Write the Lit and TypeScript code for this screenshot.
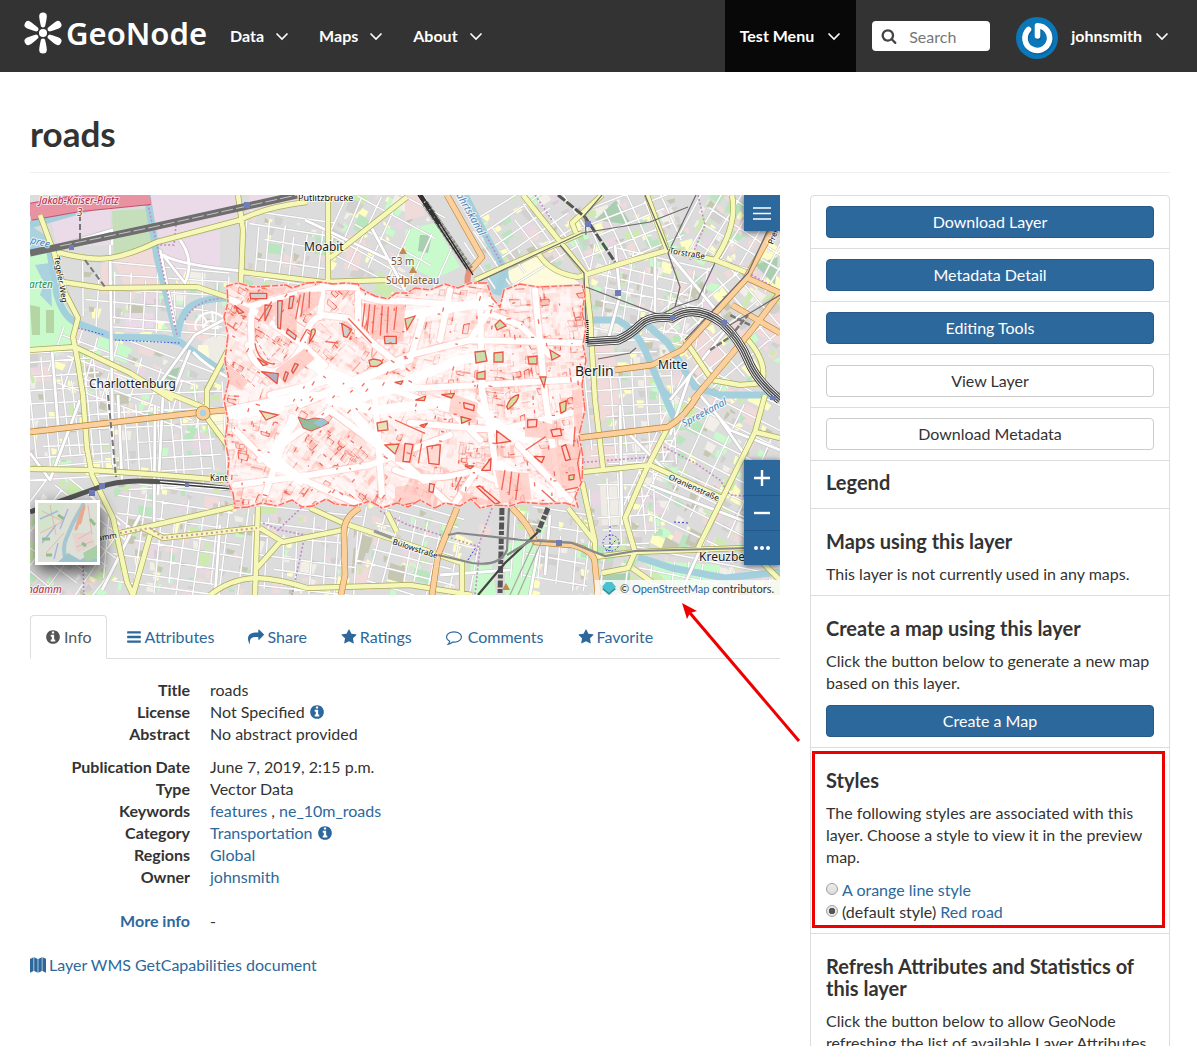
import { LitElement, html, svg, css } from "lit";
import { customElement, property, state } from "lit/decorators.js";

/* ---------- icons ---------- */

const ICONS: Record<string, string> = {
  info: "M1152 1376v-160q0-14-9-23t-23-9h-96v-512q0-14-9-23t-23-9h-320q-14 0-23 9t-9 23v160q0 14 9 23t23 9h96v320h-96q-14 0-23 9t-9 23v160q0 14 9 23t23 9h448q14 0 23-9t9-23zm-128-896v-160q0-14-9-23t-23-9h-192q-14 0-23 9t-9 23v160q0 14 9 23t23 9h192q14 0 23-9t9-23zm640 416q0 209-103 385.5t-279.5 279.5-385.5 103-385.5-103-279.5-279.5-103-385.5 103-385.5 279.5-279.5 385.5-103 385.5 103 279.5 279.5 103 385.5z",
  bars: "M1664 1344v128q0 26-19 45t-45 19h-1408q-26 0-45-19t-19-45v-128q0-26 19-45t45-19h1408q26 0 45 19t19 45zm0-512v128q0 26-19 45t-45 19h-1408q-26 0-45-19t-19-45v-128q0-26 19-45t45-19h1408q26 0 45 19t19 45zm0-512v128q0 26-19 45t-45 19h-1408q-26 0-45-19t-19-45v-128q0-26 19-45t45-19h1408q26 0 45 19t19 45z",
  share: "M1792 640q0 26-19 45l-512 512q-19 19-45 19t-45-19-19-45v-256h-224q-98 0-175.5 6t-154 21.5-133 42.5-105.5 69.5-80 101-48.5 138.5-17.5 181q0 55 5 123 0 6 2.5 23.5t2.5 26.5q0 15-8.5 25t-23.5 10q-16 0-28-17-7-9-13-22t-13.5-30-10.5-24q-127-285-127-451 0-199 53-333 162-403 875-403h224v-256q0-26 19-45t45-19 45 19l512 512q19 19 19 45z",
  star: "M1728 647q0 22-26 48l-363 354 86 500q1 7 1 20 0 21-10.5 35.5t-30.5 14.5q-19 0-40-12l-449-236-449 236q-22 12-40 12-21 0-31.5-14.5t-10.5-35.5q0-6 2-20l86-500-364-354q-25-27-25-48 0-37 56-46l502-73 225-455q19-41 49-41t49 41l225 455 502 73q56 9 56 46z",
  comment: "M896 384q-204 0-381.5 69.5t-282 187.5-104.5 255q0 112 71.5 213.5t201.5 175.5l87 50-27 96q-24 91-70 172 152-63 275-171l43-38 57 6q69 8 130 8 204 0 381.5-69.5t282-187.5 104.5-255-104.5-255-282-187.5-381.5-69.5zm896 512q0 174-120 321.5t-326 233-450 85.5q-70 0-145-8-198 175-460 242-49 14-114 22h-5q-15 0-27-10.5t-16-27.5v-1q-3-4-.5-12t2-10 4.5-9.5l6-9 7-8.5 8-9q7-8 31-34.5t34.5-38 31-39.5 32.5-51 27-59 26-76q-157-89-247.5-220t-90.5-281q0-130 71-248.5t191-204.5 286-136.5 348-50.5 348 50.5 286 136.5 191 204.5 71 248.5z",
  search: "M1216 832q0-185-131.5-316.5t-316.5-131.5-316.5 131.5-131.5 316.5 131.5 316.5 316.5 131.5 316.5-131.5 131.5-316.5zm512 832q0 52-38 90t-90 38q-54 0-90-38l-343-342q-179 124-399 124-143 0-273.5-55.5t-225-150-150-225-55.5-273.5 55.5-273.5 150-225 225-150 273.5-55.5 273.5 55.5 225 150 150 225 55.5 273.5q0 220-124 399l343 343q37 37 37 90z",
  map: "M0 220L400 40V1560L0 1752zM470 40L860 230V1750L470 1560zM930 230L1320 40V1560L930 1750zM1390 40L1792 200V1752L1390 1560z",
};

@customElement("fa-icon")
export class FaIcon extends LitElement {
  @property() name = "info";
  static styles = css`
    :host { display: inline-flex; width: 16px; height: 16px; vertical-align: -2px; }
    svg { width: 100%; height: 100%; fill: currentColor; }
  `;
  render() {
    return html`<svg viewBox="0 0 1792 1792" aria-hidden="true"><path d=${ICONS[this.name]}></path></svg>`;
  }
}

@customElement("chevron-down")
export class ChevronDown extends LitElement {
  static styles = css`
    :host { display: inline-flex; width: 14px; height: 10px; }
    svg { width: 14px; height: 10px; fill: none; stroke: currentColor; stroke-width: 1.6; }
  `;
  render() {
    return html`<svg viewBox="0 0 14 10" aria-hidden="true"><path d="M1.5 2.5L7 8L12.5 2.5"></path></svg>`;
  }
}

/* ---------- map drawing ---------- */

function seeded(seed: number) {
  return () => {
    seed = (seed * 1664525 + 1013904223) >>> 0;
    return seed / 4294967296;
  };
}

interface Zone { x: number; y: number; w: number; h: number; a: number; gx: number; gy: number; }

const ZONES: Zone[] = [
  { x: 50, y: 70, w: 150, h: 70, a: 4, gx: 15, gy: 13 },
  { x: 212, y: 22, w: 90, h: 70, a: 9, gx: 13, gy: 16 },
  { x: 300, y: 0, w: 120, h: 90, a: 28, gx: 19, gy: 21 },
  { x: -10, y: 155, w: 100, h: 130, a: -4, gx: 12, gy: 13 },
  { x: 80, y: 185, w: 120, h: 110, a: -3, gx: 15, gy: 15 },
  { x: 20, y: 150, w: 170, h: 70, a: 20, gx: 22, gy: 18 },
  { x: -20, y: 295, w: 110, h: 110, a: 38, gx: 24, gy: 17 },
  { x: 75, y: 295, w: 150, h: 110, a: 8, gx: 15, gy: 14 },
  { x: 220, y: 315, w: 110, h: 90, a: 6, gx: 16, gy: 15 },
  { x: 315, y: 310, w: 130, h: 90, a: 15, gx: 16, gy: 15 },
  { x: 480, y: 315, w: 90, h: 90, a: 8, gx: 16, gy: 17 },
  { x: 440, y: 0, w: 110, h: 80, a: -33, gx: 19, gy: 17 },
  { x: 545, y: 0, w: 110, h: 72, a: -22, gx: 16, gy: 14 },
  { x: 555, y: 60, w: 120, h: 85, a: 12, gx: 17, gy: 14 },
  { x: 655, y: -5, w: 110, h: 90, a: 32, gx: 16, gy: 17 },
  { x: 555, y: 145, w: 90, h: 130, a: -3, gx: 12, gy: 12 },
  { x: 640, y: 80, w: 110, h: 110, a: -40, gx: 18, gy: 17 },
  { x: 560, y: 275, w: 70, h: 80, a: -2, gx: 14, gy: 15 },
  { x: 615, y: 190, w: 150, h: 170, a: 26, gx: 22, gy: 18 },
  { x: 570, y: 365, w: 190, h: 50, a: 12, gx: 20, gy: 16 },
];

const PATCH_COLORS = ["#f1dada", "#f1dada", "#ffffc4", "#ffffc4", "#c8facc", "#b9e6bf", "#f2efe9", "#cdebb0", "#e9d8e4", "#c6c7b2", "#d3d0d0"];

function buildCity() {
  const rnd = seeded(41);
  const streets: string[] = [];
  const patches: string[][] = PATCH_COLORS.map(() => []);
  for (const z of ZONES) {
    const t = (z.a * Math.PI) / 180;
    const cx = z.x + z.w / 2;
    const cy = z.y + z.h / 2;
    const p = (u: number, v: number) =>
      `${(cx + u * Math.cos(t) - v * Math.sin(t)).toFixed(1)} ${(cy + u * Math.sin(t) + v * Math.cos(t)).toFixed(1)}`;
    const n = Math.round((z.w * z.h) / (z.x > 430 ? 120 : 180));
    for (let i = 0; i < n; i++) {
      const u = (rnd() - 0.5) * z.w;
      const v = (rnd() - 0.5) * z.h;
      const big = rnd() > 0.82 ? 2 : 1;
      const w = (3 + rnd() * 7) * big;
      const h = (3 + rnd() * 6) * big;
      const k = Math.floor(rnd() * PATCH_COLORS.length);
      patches[k].push(`M${p(u, v)}L${p(u + w, v + rnd() * 2)}L${p(u + w - rnd() * 3, v + h)}L${p(u + rnd() * 2, v + h)}Z`);
    }
    for (let u = -z.w / 2; u < z.w / 2; u += z.gx * (0.7 + rnd() * 0.6)) {
      const cut = rnd() * 0.3;
      streets.push(`M${p(u, -z.h / 2 + z.h * cut)}L${p(u + rnd() * 5, z.h / 2 - (rnd() * z.h) / 5)}`);
    }
    for (let v = -z.h / 2; v < z.h / 2; v += z.gy * (0.7 + rnd() * 0.6)) {
      streets.push(`M${p(-z.w / 2 + (rnd() * z.w) / 4, v)}L${p(z.w / 2 - (rnd() * z.w) / 5, v + rnd() * 5 - 2)}`);
    }
  }
  return { streets: streets.join(""), patches: patches.map((a) => a.join("")) };
}

const LAYER_EDGE =
  "M197 91L208 88L222 92L240 91L256 90L262 93L277 88L290 87L303 89L315 88L328 89L331 94L345 101L358 104L366 98L377 98L385 93L400 95L415 89L428 93L440 88L457 88L462 103L470 112L474 95L490 89L508 92L530 91L552 90L555 100L552 118L556 132L553 150L556 165L552 190L555 215L549 240L553 262L552 286L545 302L548 312L535 308L512 309L492 307L480 311L463 310L450 313L441 304L430 311L415 308L405 313L390 305L378 312L367 308L352 313L340 306L325 311L305 309L296 304L283 311L272 312L262 305L247 311L232 308L218 312L205 313L203 298L197 286L199 265L195 245L198 225L194 205L199 185L195 165L198 140L194 122L198 108Z";

function buildLayer() {
  const rnd = seeded(977);
  const inX = () => 192 + rnd() * 366;
  const inY = () => 86 + rnd() * 228;
  const angle = (x: number, y: number) => {
    const base = x < 290 && y < 190 ? 32 : x > 470 ? -6 : x > 330 && y < 150 ? 10 : 24 + 18 * Math.sin(x / 40);
    return ((base + (rnd() > 0.5 ? 90 : 0) + (rnd() - 0.5) * 12) * Math.PI) / 180;
  };
  const seg = (min: number, max: number) => {
    const x = inX();
    const y = inY();
    const a = angle(x, y);
    const l = min + rnd() * (max - min);
    return `M${x.toFixed(1)} ${y.toFixed(1)}l${(l * Math.cos(a)).toFixed(1)} ${(l * Math.sin(a)).toFixed(1)}`;
  };
  const many = (n: number, f: () => string) => Array.from({ length: n }, f).join("");
  const block = () => {
    const x = inX();
    const y = inY();
    const a = angle(x, y);
    const w = 4 + rnd() * 8;
    const h = 3 + rnd() * 4;
    const c = Math.cos(a);
    const s = Math.sin(a);
    return `M${x.toFixed(1)} ${y.toFixed(1)}l${(w * c).toFixed(1)} ${(w * s).toFixed(1)}l${(-h * s).toFixed(1)} ${(h * c).toFixed(1)}l${(-w * c * 0.8).toFixed(1)} ${(-w * s * 0.8).toFixed(1)}z`;
  };
  return {
    pink: many(360, () => seg(10, 30)),
    red: many(380, () => seg(4, 16)),
    blocks: many(240, block),
    haze: many(1000, () => seg(8, 28)),
    late: many(30, block),
    veil: many(620, () => seg(10, 34)),
    ticks: many(210, () => seg(1, 5)),
  };
}

const CITY = buildCity();
const LAYER = buildLayer();

const YELLOW =
  "M10 20L24 58L35 98L48 123L43 142L48 168L53 200L57 253L62 280L83 323L97 387L103 400M27 57Q60 66 80 63T127 47L210 25Q235 12 277 7M33 87L73 93L167 92L197 102M208 0L213 35L211 88M212 77L293 87L357 85M298 0L298 87M377 2L300 63M0 155L45 152L100 178L143 205M130 195L175 213M198 155L177 195L177 213M177 223L197 250M0 274L60 275L133 280L193 285M90 338L203 312M113 333L133 343L227 333M120 340L103 400M228 312L225 400M230 333L253 347L313 335M250 347L227 373M180 400Q200 384 227 383Q250 384 277 393L380 390L442 400M280 313L313 328L380 350L432 368L432 400M357 317L367 337M493 0L555 78L560 122L565 205L573 273M445 85L552 38M572 0L542 28L546 38M508 58Q520 78 548 82L600 66L638 55L685 65L718 78M617 0L638 58M702 0Q708 30 685 65M655 145L682 185L710 190L732 188Q738 168 718 145M735 200L725 237L668 353M725 237L750 243M638 232L615 277L595 323L605 357L598 373L572 378M553 277L620 270L692 303M552 287L565 347L565 362M538 313L565 347M565 362L605 357L713 353L750 352M602 373L622 387M730 365L750 385";
const ORANGE =
  "M0 237L173 217L197 215M330 313Q313 322 314 340L315 380L311 400M427 313L408 360L402 400M482 313Q500 330 505 347L542 350Q566 356 565 370L568 400M547 243L638 232Q655 222 668 200M585 175L622 170L652 155L715 85L750 22M663 205L722 135L750 98M715 82L750 98M702 110L750 138M417 0L452 62L438 78";
const WATER =
  "M20 57L27 100Q34 123 47 128L83 142L133 143L150 147L193 177M147 142Q150 120 160 112T197 103M117 0L127 62L147 142M0 30L77 8L120 0M435 0L458 45L475 75L467 100M557 125L588 125Q606 135 615 155L632 195L642 205M615 128L638 148L665 192L690 200L750 200M608 362L642 373L695 383L750 377M632 195L645 225";
const WHITE_MAIN =
  "M25 52L82 35L82 50M80 50L83 270M150 45Q165 65 155 88L133 60Q150 70 212 76M130 55L145 130M0 258L20 285L50 205M22 155L28 230M160 155L140 205M193 125L165 140L125 195M163 157Q175 170 197 182M275 25L370 70M340 30L375 95M88 200L92 285M125 210L124 340M133 200L128 300M60 300L90 330M190 330L185 400M72 395L110 320M410 380L480 375M510 345L500 400M520 320L515 380M585 50L590 100L578 145M640 60L690 120M660 60L720 75M625 60L625 120M590 210L592 330M700 130L640 205M680 210L715 260M670 200L700 235L750 255M600 240L650 290M620 290L750 340M690 310L650 400M660 180L640 240";

const LAYER_ROADS =
  "M218 112L293 92L330 92M199 104L218 112L272 149L295 170M222 112Q220 135 222 152M218 150Q222 172 242 177Q262 172 274 147Q278 125 292 120L318 123L345 150L372 172M293 88L290 122M328 98L328 140M330 100Q350 108 372 106L460 112M198 215L260 202L330 196L450 190L552 184M195 222L290 200L380 160L440 145L552 148M320 185L345 200L352 300M262 222L235 300M205 290L280 280L340 270L420 240M440 145L458 118L490 130L520 160M452 195L462 245L468 290M380 228L470 235L552 215M488 250L540 305M395 115L380 165L270 210M365 275Q400 290 445 275L480 292M445 278L425 308M355 250L420 310M420 95L410 145M450 100L452 200M230 265L300 215L340 245L400 290M505 95L515 200L530 300M205 235L240 270L330 310M240 200L300 185L350 190L420 215L450 245";

const CORE_ROADS = "M258 205L300 178L330 190L372 188L430 165L470 160M285 170L320 205L380 190M300 205L345 215L440 205L470 232L500 245M205 220L250 212M265 225L240 260L270 285M320 215L350 250M380 120L470 105M470 270L520 300";

const label = (x: number, y: number, text: string, cls = "place", rot = 0) =>
  svg`<text class=${cls} transform="translate(${x} ${y}) rotate(${rot})">${text}</text>`;

@customElement("layer-map")
export class LayerMap extends LitElement {
  static styles = css`
    :host { display: block; position: relative; height: 400px; overflow: hidden; font-family: Lato, "Noto Sans", sans-serif; }
    .canvas { display: block; width: 100%; height: 100%; }
    text { font-family: "Noto Sans", sans-serif; paint-order: stroke; stroke: rgba(255, 255, 255, 0.7); stroke-width: 2px; }
    .place { font-size: 12px; fill: #222; }
    .city { font-size: 14px; fill: #222; }
    .street { font-size: 8px; fill: #111; }
    .road { font-size: 9px; fill: #111; }
    .peak { font-size: 10px; fill: #7a5535; }
    .river { font-size: 10px; fill: #4a86bb; font-style: italic; }
    .park { font-size: 10px; fill: #2f8a4c; font-style: italic; }
    .exit { font-size: 10px; fill: #b02a45; font-style: italic; }
    .btn { display: flex; align-items: center; justify-content: center; width: 36px; height: 35px; padding: 0; border: 0; background: #2c689c; color: #fff; }
    .btn svg { width: 18px; height: 18px; stroke: #fff; stroke-width: 2; fill: none; }
    .menu { position: absolute; top: 0; right: 0; height: 36px; box-shadow: 0 1px 6px rgba(0, 0, 0, 0.6); }
    .menu svg { stroke-width: 1.6; }
    .zoom { position: absolute; right: 0; bottom: 30px; display: flex; flex-direction: column; box-shadow: 0 1px 6px rgba(0, 0, 0, 0.6); }
    .zoom .btn + .btn { border-top: 1px solid #23588a; }
    .thumb { position: absolute; left: 5px; bottom: 30px; width: 65px; height: 65px; padding: 0; border: 3px solid #fff; background: #d5dcd4; box-shadow: 2px 6px 16px rgba(0, 0, 0, 0.7); }
    .thumb svg { display: block; width: 59px; height: 59px; }
    .credit { position: absolute; right: 0; bottom: 0; display: flex; align-items: flex-end; gap: 4px; height: 15px; padding: 0 6px 0 7px; background: rgba(255, 255, 255, 0.75); color: #333; font-size: 11px; line-height: 12px; white-space: pre; }
    .credit svg { width: 14px; height: 14px; }
    .credit a { color: #2c689c; text-decoration: none; }
  `;

  private base() {
    return svg`
      <rect width="750" height="400" fill="#dddcdc"></rect>
      ${CITY.patches.map((d, i) => svg`<path d=${d} fill=${PATCH_COLORS[i]}></path>`)}
      <path fill="#ebdbe8" d="M20 20L80 12L82 50L27 52zM120 0L208 0L212 28L130 48zM130 50L190 35L190 73L158 68L150 92L135 60zM95 118L123 118L123 137L95 137zM220 0L290 0L265 8L215 22z"></path>
      <path fill="#c6dfbb" d="M82 16L116 14L126 54L112 58L84 64z"></path>
      <path fill="#f1dada" d="M84 65L128 52L132 90L95 92zM72 68L80 68L80 92L70 90zM318 40L335 45L328 76L314 74zM155 125L180 128L178 150L160 140zM375 0L392 0L395 20L375 26zM560 148L584 148L590 215L566 230zM555 250L590 250L592 270L556 274zM650 145L680 135L700 160L672 182zM735 120L750 118L750 150L728 140z"></path>
      <path fill="#c8facc" d="M0 60L20 58L28 100L48 128L43 150L0 154zM375 35L405 28L430 72L405 84L375 70zM475 350L500 340L512 345L498 400L475 400zM440 372L462 370L466 400L445 400zM625 200L650 210L660 230L640 225zM610 365L690 370L690 398L640 388z"></path>
      <path fill="#a9cfb0" d="M586 5L602 30L565 25zM570 380L600 378L600 396L570 396zM725 70L748 62L745 90zM390 40L402 40L398 58L388 56zM140 175L150 172L145 187L135 183z"></path>
      <path fill="#b5d6a4" d="M0 110L10 112L10 140L2 140zM16 115L24 115L24 138L16 138z"></path>
      <path fill="#efece5" d="M175 145L197 135L197 165L182 175L165 160zM570 290L590 285L592 330L572 330z"></path>
      <path fill="#fdfbdc" d="M475 78L505 62L545 84L555 94L485 92zM183 215L198 212L197 246L180 226zM168 150L178 150L180 170L168 165z"></path>
      <path fill="#aad3df" d="M5 70L20 68L22 112L10 100L14 88zM0 30L22 45L24 58L0 58zM457 82L478 75L480 90L470 100L460 98z"></path>
      <path d=${CITY.streets} fill="none" stroke="#c9c7c7" stroke-width="2.4"></path>
      <path d=${CITY.streets} fill="none" stroke="#fff" stroke-width="1.5"></path>
      <path d="M166 135a15 13 0 0 1 30-8M174 133a7 7 0 0 1 14 0zM172 120L177 127M182 116L183 126" fill="none" stroke="#fff" stroke-width="2"></path>
      <path d=${WATER} fill="none" stroke="#a4cfdc" stroke-width="7" stroke-linejoin="round"></path>
      <path d=${WHITE_MAIN} fill="none" stroke="#c4c2c2" stroke-width="4" stroke-linejoin="round"></path>
      <path d=${WHITE_MAIN} fill="none" stroke="#fff" stroke-width="2.8" stroke-linejoin="round"></path>
      <path d="M48 133L75 140M85 145L150 148" fill="none" stroke="#4646e0" stroke-dasharray="1.5 2"></path>
      <path d="M117 5L147 140M155 125Q165 104 195 103M445 20L475 75M146 30L144 50L120 50M233 328L250 335L275 340L262 400M247 336L272 312M53 371L54 400M350 316L378 330L450 352L445 400M462 313L445 360M545 268L622 262L630 250L665 268L690 285L700 300L730 302M668 0L675 30L660 65M700 68L740 90M505 0L522 25" fill="none" stroke="#c08cc4" stroke-width="1.6" stroke-dasharray="2 2"></path>
      <path d="M0 17L50 8L120 1" fill="none" stroke="#c9506a" stroke-width="18"></path>
      <path d="M0 17L50 8L120 1" fill="none" stroke="#e892a2" stroke-width="16"></path>
      <path d=${YELLOW} fill="none" stroke="#aaa957" stroke-width="6" stroke-linejoin="round"></path>
      <path d=${YELLOW} fill="none" stroke="#f5f8b8" stroke-width="4.6" stroke-linejoin="round"></path>
      <path d=${ORANGE} fill="none" stroke="#b98335" stroke-width="6.4" stroke-linejoin="round"></path>
      <path d=${ORANGE} fill="none" stroke="#fbd09c" stroke-width="5.2" stroke-linejoin="round"></path>
      <path d="M441 74Q436 80 438 92" fill="none" stroke="#e8907c" stroke-width="6"></path>
      <circle cx="173" cy="218" r="5" fill="#aad3df" stroke="#b98335" stroke-width="5"></circle>
      <circle cx="173" cy="218" r="5" fill="#aad3df" stroke="#fbd09c" stroke-width="3.6"></circle>
      <path d="M90 338L120 333L133 343L227 333" fill="none" stroke="#cf94ae" stroke-width="2" stroke-dasharray="2 3"></path>

      <path d="M0 58L123 32L267 0" fill="none" stroke="#6e6e6e" stroke-width="7"></path>
      <path d="M30 51L123 32L267 0" fill="none" stroke="#c9c3c6" stroke-width="1" stroke-dasharray="12 3"></path>
      <path d="M0 317L67 293Q85 286 110 286T203 294" fill="none" stroke="#555" stroke-width="5"></path>
      <path d="M130 288L203 294" fill="none" stroke="#fff" stroke-width="4"></path>
      <path d="M130 288L203 294" fill="none" stroke="#333" stroke-width="1.6"></path>
      <path d="M78 200Q83 250 86 282M50 20L50 45M55 65L75 92" fill="none" stroke="#777" stroke-width="2" stroke-dasharray="6 3"></path>
      <path d="M395 8L440 74" fill="none" stroke="#8d8d86" stroke-width="7" stroke-dasharray="3 .7 1 .5"></path>
      <path d="M388 0L437 74M392 0L443 80" fill="none" stroke="#222" stroke-width="1.2"></path>
      <path d="M390 0L410 30" fill="none" stroke="#333" stroke-width="4" stroke-dasharray="8 1"></path>
      <path d="M528 0L555 22L585 67" fill="none" stroke="#555" stroke-width="3" stroke-dasharray="9 2"></path>
      <path d="M472 313L470 400M518 313L508 337" fill="none" stroke="#555" stroke-width="5" stroke-dasharray="7 1.5 4 2"></path>
      <path d="M508 337L475 368L448 400" fill="none" stroke="#444" stroke-width="2.2"></path>
      <path d="M505 345L480 400M512 345L488 400" fill="none" stroke="#a9a9a4" stroke-width="1.2"></path>
      <path d="M418 340L428 338L492 345L542 348L575 361L605 356L720 353M408 360L442 368Q470 372 477 355L479 313M477 360L502 345" fill="none" stroke="#888" stroke-width="2.2"></path>
      <path d="M445 88L552 38L620 27L658 12M572 0L555 20L556 40M530 50L554 78L556 130M556 92L630 120L645 112L650 92L638 58L666 0M645 112L668 104L685 68M568 164L600 158L606 153M655 145L718 78L740 30M700 130L750 100M615 0L638 55" fill="none" stroke="#6c6969" stroke-width="1.2"></path>
      ${[["#333", 9], ["#fff", 7.4], ["#555", 5.6], ["#fff", 2.6], ["#444", 1.4]].map(
        ([c, w]) => svg`<path d="M557 147L588 145Q600 140 610 130T642 123Q665 108 692 128Q710 145 718 165T750 205" fill="none" stroke=${c} stroke-width=${w}></path>`
      )}
      <path d="M557 125L557 148" stroke="#222" stroke-width="3" stroke-dasharray="1 1"></path>
      <path d="M680 155L700 142L718 120M720 130L700 120" fill="none" stroke="#777" stroke-width="2.4" stroke-dasharray="6 2"></path>
      <path d="M344 336L362 343" stroke="#999" stroke-width="3"></path>
      <circle cx="581" cy="348" r="8" fill="none" stroke="#3333dd" stroke-dasharray="1.5 2"></circle>
      <path d="M580 331L580 356M576 356L586 345M644 327L658 328M438 365L446 352" stroke="#3333dd" stroke-dasharray="2 2"></path>
      <g fill="#6f7cb8"><path d="M214 7h6v6h-6zM39 50h5v5h-5zM555 26h6v6h-6zM585 95h6v6h-6zM640 120h5v5h-5zM691 125h6v6h-6zM526 345h6v6h-6zM69 288h6v6h-6zM59 295h6v6h-6zM155 288h4v4h-4zM740 201h6v4h-6z"></path></g>
    `;
  }

  private overlay() {
    return svg`
      <g clip-path="url(#edge)">
        <path d=${LAYER_EDGE} fill="#ffe2de" fill-opacity=".96"></path>
        <path d=${LAYER.pink} stroke="#ffc6be" stroke-width="4"></path>
        <path d=${LAYER.red} stroke="#f2705f" stroke-width="1.3"></path>
        <path d=${LAYER.blocks} fill="#fbc3ba" stroke="#ec6656" stroke-width="1"></path>
        <path d=${LAYER.haze} stroke="#fff" stroke-opacity=".6" stroke-width="4.4"></path>
        <path d=${LAYER.late} fill="#ffd2cb" stroke="#f0604f" stroke-width="1"></path>
        <path d=${LAYER_ROADS} fill="none" stroke="#ffc9c1" stroke-width="8" stroke-linejoin="round" stroke-linecap="round"></path>
        <path d=${LAYER_ROADS} fill="none" stroke="#fff" stroke-width="6" stroke-linejoin="round" stroke-linecap="round"></path>
        <path d=${CORE_ROADS} fill="none" stroke="#fff" stroke-opacity=".5" stroke-width="18" stroke-linejoin="round" stroke-linecap="round"></path>
        <path d=${CORE_ROADS} fill="none" stroke="#fff" stroke-width="9" stroke-linejoin="round" stroke-linecap="round"></path>
        <path d=${LAYER.veil} stroke="#fff" stroke-opacity=".36" stroke-width="5"></path>

        <g transform="translate(185 80) scale(.3333)" stroke-linejoin="round">
          <path d="M105 45L215 35L205 55L110 75zM70 85L105 100L95 130L60 100zM140 90L210 75L160 150L125 120zM180 80L245 60L245 190L180 150zM245 50L320 50L310 90L260 130zM440 85L570 90L565 200L470 190zM380 145L410 150L415 185L390 180zM180 285L270 220L300 250L210 330zM30 260L100 320L80 345L30 320z" fill="#ffc4bc" fill-opacity=".75"></path>
          <path d="M105 55h50v16h-48zM150 90l20 2-20 45zM188 78l14-1-6 85-8-4zM225 65l12-2-6 36-10 2zM218 162l26 20-4 12-26-20zM380 145l30 18-14 24-10-3zM60 92l26 20-14 4zM508 184h36v22h-34zM240 265l10 4-16 26-4-8zM212 290l8 4-10 26-5-8z" fill="#d3d0ce" stroke="#ea5545" stroke-width="4"></path>
          <path d="M256 58l-14 75M268 54l-10 70M284 50l-2 50M450 85l-8 70M464 88l-8 80M480 90l-8 85M502 92l-6 90M520 95l-4 80M545 95l-8 70M170 80l-40 60M400 130l70 75M330 200l40 4M255 200l20-36M120 205q10 60 60 62" stroke="#f26655" stroke-width="4" fill="none"></path>
          <path d="M290 165q14-10 10 10l-18 30zM462 256l14-4 20 4 6 8-16 10-20 0zM540 322l24-4-6 10zM128 250l30 18-14 4z" fill="#d8deb4" stroke="#ea5545" stroke-width="4"></path>
          <path d="M140 290l50 6-4 30-24-20z" fill="#b5adc0" stroke="#ea5545" stroke-width="4"></path>
          <path d="M120 190l20-20 60 45-40 40zM30 255l90 80" fill="none" stroke="#f58475" stroke-width="3" stroke-dasharray="14 8"></path>
        </g>
        <g transform="translate(365 195) scale(.3333)" stroke-linejoin="round">
          <path d="M0 165L60 160L50 220L0 215zM440 180L550 160L560 290L510 300L440 220zM300 240L400 250L410 330L320 340zM190 300L300 340L220 350zM390 80L500 110L510 150L390 140zM170 10L250 40L240 100L160 70zM0 290L100 280L110 350L0 345zM530 0L565 0L560 130L540 120z" fill="#ffc8c0" fill-opacity=".75"></path>
          <path d="M305 122l42 32-42 6zM398 90l28-2-2 22-26 2zM468 120l28-4 4 20-26 4zM500 170l12-6 14 44-14 4zM30 160l24 4-10 52-20-2zM245 290l10-2 60 50-14 4zM288 205l-2 36-26 0zM418 200h30l-8 18zM96 170l40-6-4 60-30-4zM104 280l14 4-4 24-12-4zM206 38l32 8-2 16-28-8z" fill="#ffd9d2" stroke="#ea5140" stroke-width="4"></path>
          <path d="M335 50q10-30 36-36q0 20-32 44zM494 40l20-8-2 30-14 8zM198 80l30 8-28 12zM62 30l30-12-4 14zM140 14l38-4-8 14zM522 256l16-2-2 14-14 2zM75 106l22-6-10 12zM210 228l26 0-10 8z" fill="#d4dfa0" stroke="#ea5140" stroke-width="4"></path>
          <path d="M0 350l60-12 40 4M540 110l-4 60M560 160l-12 60 12 70-50 10M70 220l10-60M0 90l90 40M440 300l50 45M200 260l-20 40M392 180l60-40M330 240l-10 60M350 245l-8 70M372 250l-10 80" fill="none" stroke="#f26655" stroke-width="4"></path>
        </g>

        <path d=${LAYER.ticks} stroke="#f0594a" stroke-opacity=".85" stroke-width="1.3"></path>
        <path d="M445 157l10-1 2 10-11 2zM464 158l9-1v10h-9zM447 178l8-2v8h-8zM465 130l5-5 6 6-9 4zM375 124l10-3-8 14zM498 162l9-1v8h-8zM520 155l10 6-8 4zM510 182l6 0-2 10z" fill="#cfdcae" stroke="#ea5545" stroke-width="1.3"></path>
        <path d="M460 92l12 0 0 12-4 6-6-8z" fill="#777"></path>
        <path d="M268 222l9 3 8-2 8 1 6 4-8 4-10 4-8-3z" fill="#93bd9c" stroke="#e5574a"></path>
        <path d="M283 228l8-5 7 4-7 5z" fill="#9cc5d4"></path>
        <path d="M230 216l18 4-12 5zM347 228l10-2 1 9-10 1zM355 250l14-1-4 10z" fill="#e6e3bd" stroke="#e8594a" stroke-width="1.3"></path>
      </g>
      <path d=${LAYER_EDGE} fill="none" stroke="#ffd9d4" stroke-width="2.4"></path>
      <path d=${LAYER_EDGE} fill="none" stroke="#ff6a58" stroke-width="1.4" stroke-dasharray="6 2 3 1 9 2"></path>
    `;
  }

  render() {
    return html`
      <svg class="canvas" viewBox="0 0 750 400" preserveAspectRatio="xMidYMid slice" role="img" aria-label="Map preview of the roads layer">
        <defs><clipPath id="edge"><path d=${LAYER_EDGE}></path></clipPath></defs>
        ${this.base()}
        ${this.overlay()}
        ${label(545, 181, "Berlin", "city")}
        ${label(9, 9, "Jakob-Kaiser-Platz", "exit")} ${label(47, 21, "3", "exit")}
        ${label(268, 6, "Putlitzbrücke", "road")}
        ${label(274, 56, "Moabit")} ${label(59, 193, "Charlottenburg")}
        ${label(628, 174, "Mitte")} ${label(669, 366, "Kreuzberg")}
        ${label(361, 70, "53 m", "peak")} ${label(356, 89, "Südplateau", "peak")}
        ${label(639, 58, "Torstraße", "street", 10)}
        ${label(638, 284, "Oranienstraße", "street", 24)}
        ${label(362, 349, "Bülowstraße", "street", 18)}
        ${label(180, 286, "Kant", "street")}
        ${label(24, 62, "Tegeler Weg", "street", 80)}
        ${label(68, 346, "amm", "street", -10)}
        ${label(743, 50, "Pren", "street", -70)}
        ${label(654, 232, "Spreekanal", "river", -28)}
        ${label(426, 0, "ahrtskanal", "river", 60)}
        ${label(0, 48, "pree", "river", 14)}
        ${label(-1, 93, "arten", "park")}
        ${label(-3, 398, "ndamm", "exit")}
        <path d="M369 59l4-7 4 7zM379 78l4-7 4 7zM472 395l4-7 4 7z" fill="#c58a50"></path>
      </svg>

      <button class="btn menu" aria-label="Menu">
        <svg viewBox="0 0 18 18"><path d="M0 4h18M0 9.500h18M0 15h18"></path></svg>
      </button>
      <div class="zoom">
        <button class="btn" aria-label="Zoom in"><svg viewBox="0 0 18 18"><path stroke-width="2.4" d="M1 9h16M9 1v16"></path></svg></button>
        <button class="btn" aria-label="Zoom out"><svg viewBox="0 0 18 18"><path stroke-width="2.4" d="M1 9h16"></path></svg></button>
        <button class="btn" aria-label="More"><svg viewBox="0 0 18 18"><path d="M3 9h.01M9 9h.01M15 9h.01" stroke-width="4" stroke-linecap="round"></path></svg></button>
      </div>
      <button class="thumb" aria-label="Background">
        <svg viewBox="0 0 59 59">
          <rect width="59" height="59" fill="#dde0d6"></rect>
          <path d="M0 0h28L10 30L0 26z" fill="#d3e3cc"></path>
          <path d="M28 59Q24 45 28 36L35 20L46 0" fill="none" stroke="#a6c6d0" stroke-width="4"></path>
          <path d="M20 59L30 50L42 57L59 47V59z" fill="#9dc3cc"></path>
          <path d="M45 50L59 42V55L48 59z" fill="#a9cfa9"></path>
          <path d="M34 30h18l5 12-18 8z" fill="#e6d3d0"></path>
          <path d="M38 26L44 8M42 20L46 4" stroke="#e8a98e" stroke-width="3" stroke-linecap="round"></path>
          <path d="M4 8l20 10M2 30l24-12M8 50L26 30M40 36l14-8M38 44l18-6M12 2l6 30M50 2l4 30" stroke="#e5b9a8" stroke-width="1"></path>
          <path d="M2 16l18-8M4 40l14-18M16 56l4-16M30 6l-8 20" stroke="#a9b4dc" stroke-width="1.4"></path>
          <path d="M4 36h8M20 12l6 4M44 40l4 3M8 52h6M52 16l5 6" stroke="#8fbf8e" stroke-width="3"></path>
        </svg>
      </button>
      <div class="credit"><svg viewBox="0 0 14 14" aria-hidden="true"><path d="M0 8L7 14L14 8L7 4z" fill="#2f8f9c"></path><path d="M0 6L4 1H10L14 6L7 12z" fill="#4bc0cf"></path></svg><span>© <a href="#osm">OpenStreetMap</a> contributors.</span></div>
    `;
  }
}

/* ---------- page ---------- */

@customElement("app-root")
export class AppRoot extends LitElement {
  @state() private tab = "Info";
  @state() private layerStyle = "red";

  static styles = css`
    :host { display: block; background: #fff; color: #333; font-family: Lato, "Liberation Sans", sans-serif; font-size: 16px; line-height: 22px; }
    *, *::before, *::after { box-sizing: border-box; }
    a { color: #2c689c; text-decoration: none; }
    button { font: inherit; cursor: pointer; }
    h1, h4, p, dl, dd { margin: 0; padding: 0; }

    .header { display: flex; align-items: stretch; min-height: 72px; padding: 0 28px 0 24px; background: #333; color: #fff; font-weight: 700; }
    .brand { display: flex; align-items: center; gap: 4px; padding: 0 8px 6px 0; color: #fff; font: 600 31px/42px "Noto Sans", sans-serif; }
    .brand svg { width: 38px; height: 42px; fill: #fff; }
    .nav { display: flex; }
    .link { display: flex; align-items: center; gap: 11px; padding: 0 15px; border: 0; background: none; color: #fff; font-weight: 700; font-size: 16px; }
    .right { display: flex; align-items: stretch; margin-left: auto; }
    .test { gap: 13px; background: #080808; }
    .search { display: flex; align-items: center; align-self: center; gap: 12px; width: 118px; height: 30px; margin: 0 26px 0 16px; padding: 0 8px 0 9px; border-radius: 4px; background: #fff; color: #444; }
    .search input { width: 100%; min-width: 0; padding: 2px 0 0; border: 0; outline: 0; background: none; font: 400 16px/22px Lato, sans-serif; color: #333; }
    .search input::placeholder { color: #777; opacity: 1; }
    .search fa-icon { flex: none; }
    .user { gap: 13px; padding: 0; }
    .user .avatar { width: 42px; height: 42px; margin-top: 4px; }

    .page { padding: 42px 27px 22px 30px; }
    .title { padding-bottom: 20px; margin-bottom: 22px; border-bottom: 1px solid #eee; font-size: 35px; line-height: 38px; font-weight: 700; }
    .cols { position: relative; display: grid; grid-template-columns: minmax(0, 1fr) 360px; column-gap: 30px; align-items: start; }

    .tabs { display: flex; gap: 4px; margin-top: 20px; border-bottom: 1px solid #ddd; }
    .tab { display: flex; align-items: center; gap: 3px; height: 44px; margin-bottom: -1px; padding: 0 14px; border: 1px solid transparent; border-radius: 4px 4px 0 0; background: none; color: #2c689c; }
    .tab.on { border-color: #ddd #ddd #fff; background: #fff; color: #555; }
    .tab.wide { gap: 6px; }

    .facts { display: grid; grid-template-columns: 160px minmax(0, 1fr); column-gap: 20px; }
    .facts + .facts { margin-top: 11px; }
    .facts + .more { margin-top: 22px; }
    .facts dt { text-align: right; font-weight: 700; }
    .panel { padding-top: 20px; }
    .wms { display: flex; align-items: center; gap: 3px; margin-top: 22px; }

    .side { border: 1px solid #ddd; border-radius: 4px 4px 0 0; }
    .item { position: relative; padding: 10px 15px; }
    .item + .item { border-top: 1px solid #ddd; }
    .item h4 { margin: 11px 0; font-size: 20px; line-height: 22px; font-weight: 700; }
    .item.legend { padding-bottom: 4px; }
    .item.legend h4 { margin-top: 0; }
    .btn { display: block; width: 100%; height: 32px; padding: 0; border: 1px solid #ccc; border-radius: 4px; background: #fff; color: #333; line-height: 30px; text-align: center; }
    .btn.primary { border-color: #265987; background: #2c689c; color: #fff; }
    .item p + .btn, .item p + .choice { margin-top: 11px; }
    .choice { display: flex; align-items: center; gap: 4px; }
    .choice input { appearance: none; width: 12px; height: 12px; margin: 0 0 3px; border: 1px solid #a0a0a0; border-radius: 50%; background: linear-gradient(#ececec, #dcdcdc); }
    .choice input:checked { background: radial-gradient(circle, #555 0 3px, #e6e6e6 3px); }
    .marked::after { content: ""; position: absolute; inset: 3px 4px 5px 1px; border: 3px solid #ec0000; pointer-events: none; }
    .arrow { position: absolute; right: 368px; top: 407px; width: 122px; height: 142px; pointer-events: none; }
  `;

  private menu(text: string, cls = "") {
    return html`<button class="link ${cls}">${text} <chevron-down></chevron-down></button>`;
  }

  render() {
    const tabs = [["Info", "info"], ["Attributes", "bars"], ["Share", "share"], ["Ratings", "star"], ["Comments", "comment"], ["Favorite", "star"]];
    const petal = "M17 14.500Q15.200 7 15.200 4Q15.200 .5 19 .5T22.800 4Q22.800 7 21 14.500Q19 16.500 17 14.500z";
    return html`
      <header class="header">
        <a class="brand" href="#home">
          <svg viewBox="0 0 38 42" aria-hidden="true">
            ${[0, 61, 119, 180, 241, 299].map((a) => svg`<path d=${petal} transform="rotate(${a} 19 21)"></path>`)}
            <circle cx="19" cy="21" r="4"></circle>
          </svg>
          <span>GeoNode</span>
        </a>
        <nav class="nav">${this.menu("Data")}${this.menu("Maps")}${this.menu("About")}</nav>
        <div class="right">
          ${this.menu("Test Menu", "test")}
          <label class="search"><fa-icon name="search"></fa-icon><input type="text" placeholder="Search" aria-label="Search" /></label>
          <button class="link user">
            <svg class="avatar" viewBox="0 0 42 42" aria-hidden="true">
              <circle cx="21" cy="21" r="21" fill="#0b76b8"></circle>
              <path d="M12.500 12.500A12.300 12.300 0 1 0 21.500 8.800V19" fill="none" stroke="#07528a" stroke-opacity=".45" stroke-width="6" stroke-linecap="round" transform="translate(1 1.500)"></path>
              <path d="M12.500 12.500A12.300 12.300 0 1 0 21.500 8.800V19" fill="none" stroke="#fff" stroke-width="5.600" stroke-linecap="round" stroke-linejoin="round"></path>
            </svg>
            johnsmith <chevron-down></chevron-down>
          </button>
        </div>
      </header>

      <main class="page">
        <h1 class="title">roads</h1>
        <div class="cols">
          <section>
            <layer-map></layer-map>
            <div class="tabs" role="tablist">
              ${tabs.map(([t, i]) => html`<button role="tab" aria-selected=${this.tab === t} class="tab ${this.tab === t ? "on" : ""} ${t === "Comments" ? "wide" : ""}" @click=${() => (this.tab = t)}><fa-icon name=${i}></fa-icon>${t}</button>`)}
            </div>
            <div class="panel">
              <dl class="facts">
                <dt>Title</dt><dd>roads</dd>
                <dt>License</dt><dd>Not Specified <a href="#license" aria-label="License details"><fa-icon name="info"></fa-icon></a></dd>
                <dt>Abstract</dt><dd>No abstract provided</dd>
              </dl>
              <dl class="facts">
                <dt>Publication Date</dt><dd>June 7, 2019, 2:15 p.m.</dd>
                <dt>Type</dt><dd>Vector Data</dd>
                <dt>Keywords</dt><dd><a href="#features">features</a> , <a href="#ne">ne_10m_roads</a></dd>
                <dt>Category</dt><dd><a href="#transportation">Transportation</a> <a href="#category" aria-label="Category details"><fa-icon name="info"></fa-icon></a></dd>
                <dt>Regions</dt><dd><a href="#global">Global</a></dd>
                <dt>Owner</dt><dd><a href="#owner">johnsmith</a></dd>
              </dl>
              <dl class="facts more"><dt><a href="#more">More info</a></dt><dd>-</dd></dl>
              <a class="wms" href="#wms"><fa-icon name="map"></fa-icon>Layer WMS GetCapabilities document</a>
            </div>
          </section>

          <aside class="side">
            <div class="item"><button class="btn primary">Download Layer</button></div>
            <div class="item"><button class="btn primary">Metadata Detail</button></div>
            <div class="item"><button class="btn primary">Editing Tools</button></div>
            <div class="item"><a class="btn" href="#view">View Layer</a></div>
            <div class="item"><button class="btn">Download Metadata</button></div>
            <div class="item legend"><h4>Legend</h4></div>
            <div class="item"><h4>Maps using this layer</h4><p>This layer is not currently used in any maps.</p></div>
            <div class="item">
              <h4>Create a map using this layer</h4>
              <p>Click the button below to generate a new map based on this layer.</p>
              <a class="btn primary" href="#create">Create a Map</a>
            </div>
            <div class="item marked">
              <h4>Styles</h4>
              <p>The following styles are associated with this layer. Choose a style to view it in the preview map.</p>
              <div class="choice">
                <input type="radio" id="orange" name="style" .checked=${this.layerStyle === "orange"} @change=${() => (this.layerStyle = "orange")} />
                <label for="orange"><a href="#orange">A orange line style</a></label>
              </div>
              <div class="choice">
                <input type="radio" id="red" name="style" .checked=${this.layerStyle === "red"} @change=${() => (this.layerStyle = "red")} />
                <label for="red">(default style) <a href="#red">Red road</a></label>
              </div>
            </div>
            <div class="item">
              <h4>Refresh Attributes and Statistics of this layer</h4>
              <p>Click the button below to allow GeoNode refreshing the list of available Layer Attributes</p>
            </div>
          </aside>

          <svg class="arrow" viewBox="0 0 122 142" aria-hidden="true">
            <path d="M119 139L10 11" stroke="#ee0000" stroke-width="3"></path>
            <path d="M2 1L17 9L10 11L7 17z" fill="#ee0000"></path>
          </svg>
        </div>
      </main>
    `;
  }
}
